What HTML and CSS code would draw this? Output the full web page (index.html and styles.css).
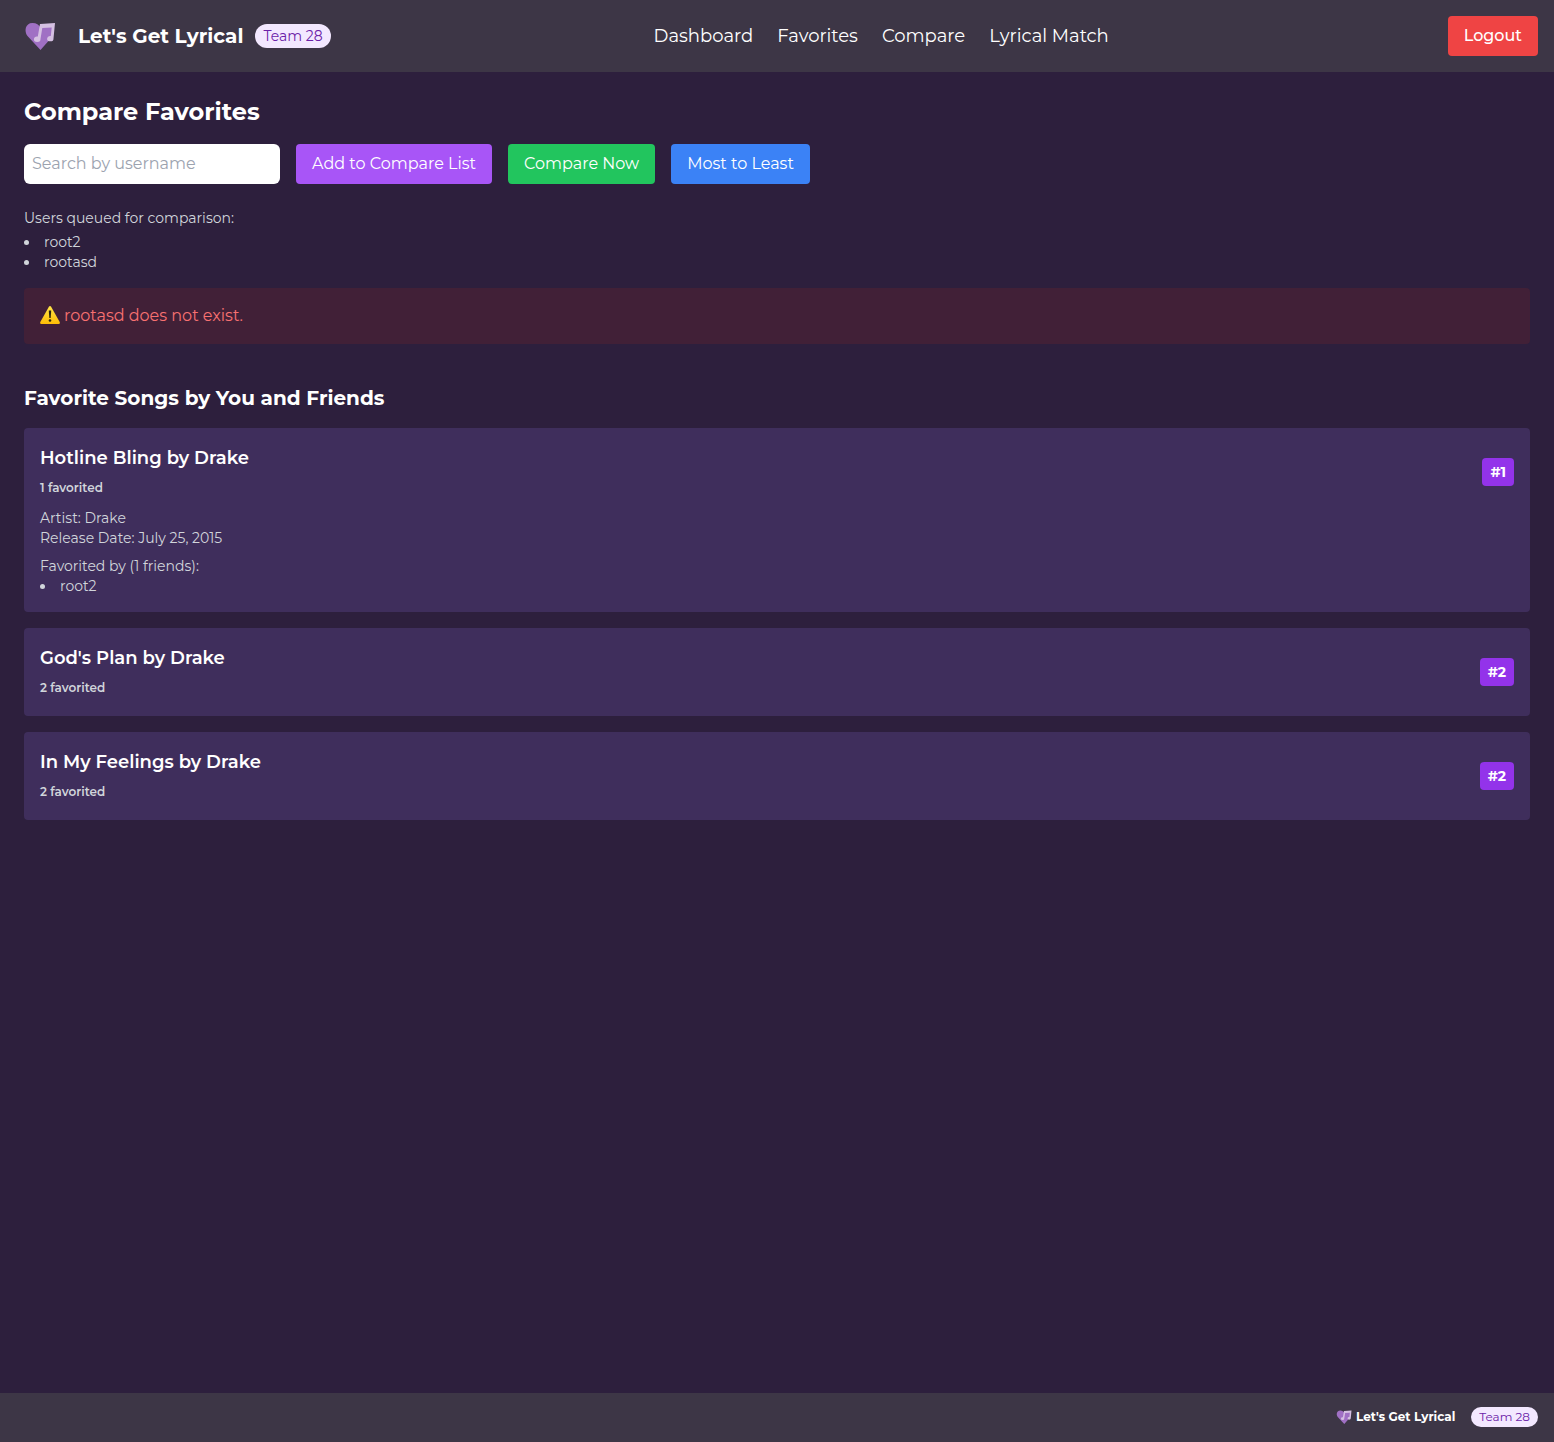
FILE: index.html
```html
<!DOCTYPE html>
<html lang="en">
<head>
<meta charset="utf-8">
<meta name="viewport" content="width=device-width, initial-scale=1">
<title>Let's Get Lyrical</title>
<link rel="stylesheet" href="styles.css">
</head>
<body>
<svg class="defs" aria-hidden="true">
  <symbol id="logo" viewBox="0 0 32 32">
    <path fill="#a070c4" d="M16.500 30 L3.500 16 C0 11.500 1 3 8.500 3 C12.500 3 15 5 16.500 7.500 C18 5 20 4 23 4 L28.500 7 L28 17 Z"/>
    <path fill="#d5c0e2" d="M16 4 L31 3 L29.500 18.500 A3.200 2.700 0 1 1 26.800 16 L27.700 7.500 L18.300 8 L16.500 19 A3.300 2.800 0 1 1 13.800 16.500 Z"/>
  </symbol>
</svg>
<header class="topbar">
  <div class="brand">
    <svg class="brand-logo" aria-hidden="true"><use href="#logo"/></svg>
    <span class="brand-name">Let's Get Lyrical</span>
    <span class="team">Team 28</span>
  </div>
  <nav class="menu">
    <a href="#dashboard">Dashboard</a>
    <a href="#favorites">Favorites</a>
    <a href="#compare">Compare</a>
    <a href="#match">Lyrical Match</a>
  </nav>
  <button class="btn logout" type="button">Logout</button>
</header>
<main class="content">
  <h1>Compare Favorites</h1>
  <form class="tools">
    <input class="search" type="text" placeholder="Search by username" aria-label="Search by username">
    <button class="btn add" type="button">Add to Compare List</button>
    <button class="btn run" type="button">Compare Now</button>
    <button class="btn sort" type="button">Most to Least</button>
  </form>
  <section class="queue">
    <p>Users queued for comparison:</p>
    <ul class="users">
      <li>root2</li>
      <li>rootasd</li>
    </ul>
  </section>
  <div class="alert" role="alert">
    <svg class="warning" viewBox="0 0 20 18" aria-hidden="true">
      <defs><linearGradient id="amber" x2="0" y2="1"><stop stop-color="#ffe64a"/><stop offset="1" stop-color="#fdbc06"/></linearGradient></defs>
      <path fill="url(#amber)" d="M9 .6Q10 -.6 11 .6L19.700 16Q20.300 18 18.700 18H1.300Q-.3 18 .3 16Z"/>
      <path fill="#2c2410" d="M8.800 4.500H11.200L10.700 12H9.300Z"/><circle cx="10" cy="14.500" r="1.300" fill="#2c2410"/>
    </svg>
    <span>rootasd does not exist.</span>
  </div>
  <h2>Favorite Songs by You and Friends</h2>
  <div class="songs">
    <article class="song">
      <div class="song-head">
        <div><h3>Hotline Bling by Drake</h3><p class="count">1 favorited</p></div>
        <span class="rank">#1</span>
      </div>
      <div class="details">
        <p>Artist: Drake</p>
        <p>Release Date: July 25, 2015</p>
        <p class="friends">Favorited by (1 friends):</p>
        <ul class="users"><li>root2</li></ul>
      </div>
    </article>
    <article class="song">
      <div class="song-head">
        <div><h3>God's Plan by Drake</h3><p class="count">2 favorited</p></div>
        <span class="rank">#2</span>
      </div>
    </article>
    <article class="song">
      <div class="song-head">
        <div><h3>In My Feelings by Drake</h3><p class="count">2 favorited</p></div>
        <span class="rank">#2</span>
      </div>
    </article>
  </div>
</main>
<footer class="footer">
  <svg class="footer-logo" aria-hidden="true"><use href="#logo"/></svg>
  <span class="footer-name">Let's Get Lyrical</span>
  <span class="team small">Team 28</span>
</footer>
</body>
</html>
```
FILE: styles.css
```css
* { box-sizing: border-box; margin: 0; padding: 0; }
body {
  min-height: 100vh;
  display: flex;
  flex-direction: column;
  background: #2d1f3d;
  color: #fff;
  font: 400 16px/24px Montserrat, Inter, sans-serif;
}
.defs { display: none; }
.topbar {
  display: flex;
  align-items: center;
  justify-content: space-between;
  padding: 16px;
  background: #3d3646;
}
.brand { display: flex; align-items: center; }
.brand-logo { width: 32px; height: 32px; margin: 0 22px 0 8px; }
.brand-name { font-size: 20px; font-weight: 700; line-height: 28px; margin-right: 12px; }
.team {
  padding: 2px 8px;
  border-radius: 12px;
  background: #f3e8ff;
  color: #6b21a8;
  font-size: 14px;
  line-height: 20px;
}
.menu { display: flex; gap: 24px; margin-right: 16px; }
.menu a { color: inherit; text-decoration: none; font-size: 18px; line-height: 28px; }
.btn {
  height: 40px;
  padding: 0 16px;
  border: 0;
  border-radius: 4px;
  color: #fff;
  font: inherit;
}
.logout { background: #ef4444; font-weight: 500; }
.content { flex: 1; padding: 24px; }
h1 { font-size: 24px; line-height: 32px; margin-bottom: 16px; }
.tools { display: flex; flex-wrap: wrap; gap: 16px; margin-bottom: 24px; }
.search {
  width: 256px;
  height: 40px;
  padding: 7px 8px 9px;
  border: 0;
  border-radius: 6px;
  background: #fff;
  color: #111827;
  font: inherit;
}
.search::placeholder { color: #9ca3af; }
.add { background: #a855f7; }
.run { background: #22c55e; }
.sort { background: #3b82f6; }
.queue, .details { color: #d1d5db; font-size: 14px; line-height: 20px; }
.queue { margin-bottom: 16px; }
.queue .users { margin-top: 4px; }
.users { list-style: disc inside; }
.alert {
  display: flex;
  align-items: center;
  gap: 4px;
  padding: 16px;
  margin-bottom: 40px;
  border-radius: 4px;
  background: #412037;
  color: #f87171;
}
.warning { width: 20px; height: 18px; margin-bottom: 2px; }
h2 { font-size: 20px; line-height: 28px; margin-bottom: 16px; }
.songs { display: flex; flex-direction: column; gap: 16px; }
.song { padding: 16px; border-radius: 4px; background: #3f2e5c; }
.song-head { display: flex; align-items: center; justify-content: space-between; }
h3 { font-size: 18px; font-weight: 600; line-height: 28px; }
.count { padding: 8px 0 4px; color: #d1d5db; font-size: 12px; font-weight: 600; line-height: 16px; }
.rank {
  padding: 4px 8px;
  border-radius: 4px;
  background: #9333ea;
  font-size: 14px;
  font-weight: 700;
  line-height: 20px;
}
.details { padding-top: 8px; }
.friends { margin-top: 8px; }
.footer {
  display: flex;
  align-items: center;
  justify-content: flex-end;
  padding: 14px 16px 15px;
  background: #3d3646;
}
.footer-logo { width: 16px; height: 16px; margin-right: 4px; }
.footer-name { font-size: 12px; font-weight: 700; line-height: 16px; margin-right: 16px; }
.small { font-size: 12px; line-height: 16px; }
```
